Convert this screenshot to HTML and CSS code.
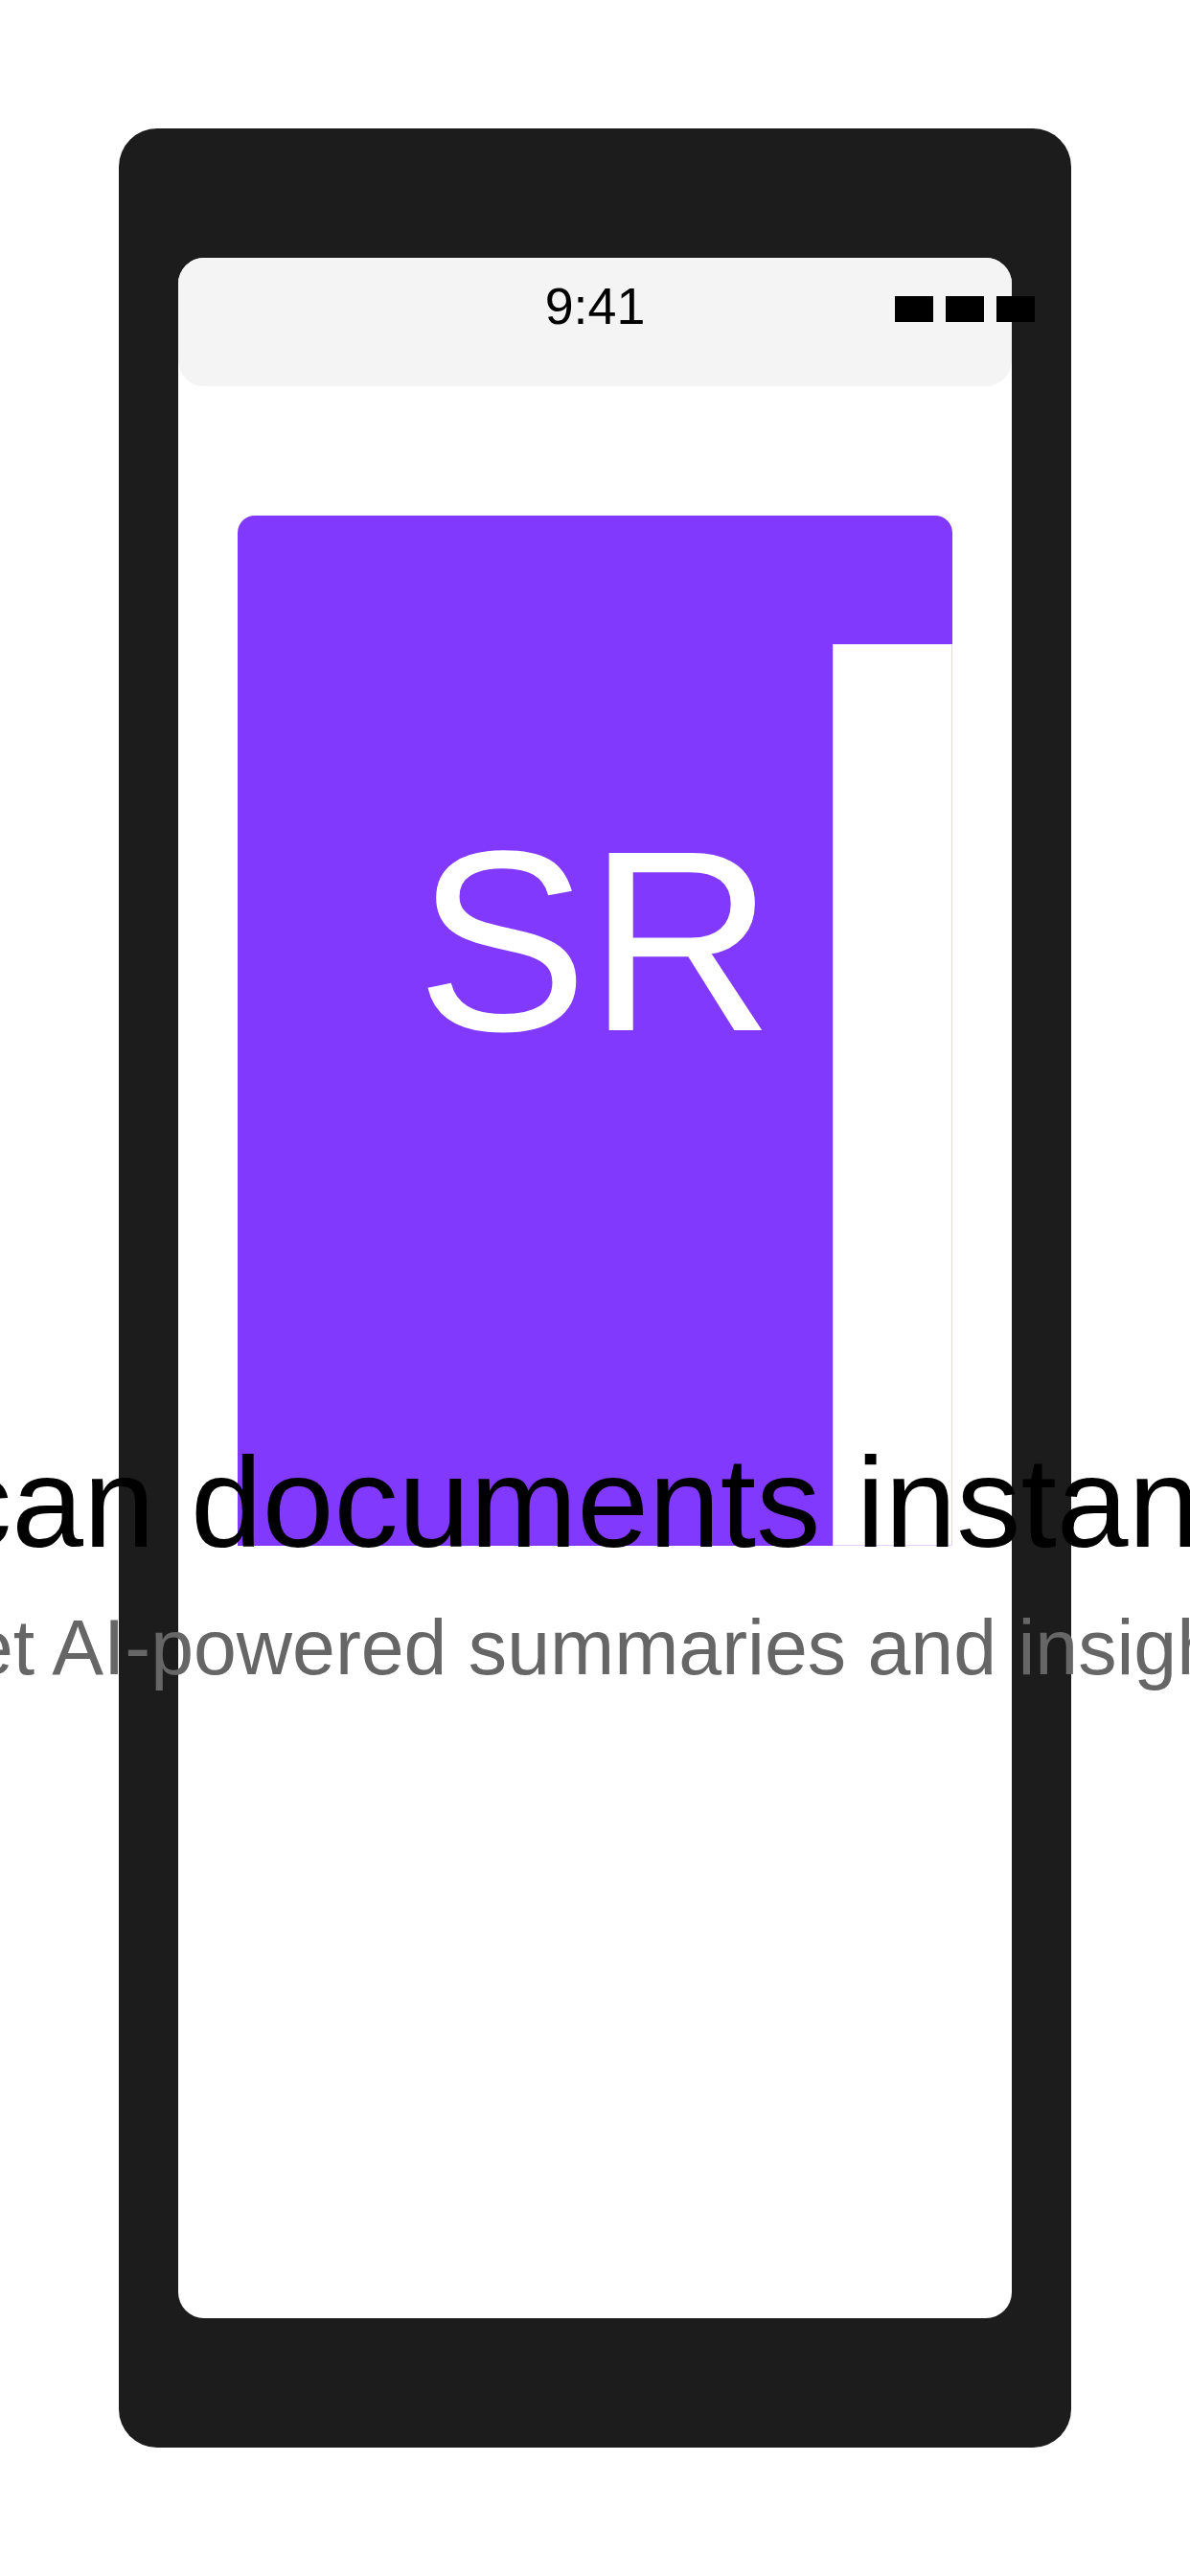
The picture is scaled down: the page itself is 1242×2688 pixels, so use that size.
FILE: index.html
```html
<!DOCTYPE html>
<html lang="en">
<head>
<meta charset="utf-8">
<title>Scan documents instantly</title>
<link rel="stylesheet" href="styles.css">
</head>
<body>
<div class="phone">
  <div class="screen">
    <div class="status">
      <span class="status-left"></span>
      <span class="time">9:41</span>
      <div class="icons"><i></i><i></i><i></i></div>
    </div>
    <div class="content">
      <div class="card">
        <span class="mono">SR</span>
        <div class="page"></div>
      </div>
      <h1 class="title">Scan documents instantly</h1>
      <p class="subtitle">Get AI-powered summaries and insights</p>
    </div>
  </div>
</div>
</body>
</html>
```

FILE: styles.css
```css
* { box-sizing: border-box; }
html, body {
  margin: 0;
  padding: 0;
  background: #ffffff;
  font-family: "Liberation Sans", Arial, sans-serif;
}
.phone {
  width: 993.6px;
  height: 2419.2px;
  margin: 134.4px auto 0;
  padding: 134.4px 62.1px;
  background: #1c1c1c;
  border-radius: 40px;
}
.screen {
  height: 100%;
  background: #ffffff;
  border-radius: 27px;
  display: flex;
  flex-direction: column;
}
.status {
  height: 134.4px;
  flex: none;
  background: #f4f4f4;
  border-radius: 27px;
  display: grid;
  grid-template-columns: 1fr auto 1fr;
  align-items: start;
  padding-top: 19.5px;
}
.time {
  font-size: 53.76px;
  line-height: normal;
  color: #000;
}
.icons {
  justify-self: end;
  display: flex;
  gap: 13px;
  margin-top: 21px;
  margin-right: -24px;
}
.icons i {
  display: block;
  width: 40px;
  height: 27px;
  background: #000;
}
.content {
  display: flex;
  flex-direction: column;
  align-items: center;
}
.card {
  position: relative;
  width: 745.2px;
  height: 1075.2px;
  margin-top: 134.4px;
  background: #8139fd;
  border-radius: 18px 18px 0 0;
  display: flex;
  justify-content: center;
  padding-top: 290px;
}
.mono {
  color: #ffffff;
  font-size: 268.8px;
  line-height: normal;
}
.page {
  position: absolute;
  right: 0;
  top: 134.4px;
  bottom: 0;
  width: 124.2px;
  background: #ffffff;
  border: 1px solid #e2d4ff;
}
.title {
  margin: -123px 0 0;
  font-size: 134.4px;
  font-weight: normal;
  line-height: normal;
  white-space: nowrap;
  color: #000;
  position: relative;
}
.subtitle {
  margin: 29.5px 0 0;
  font-size: 80.64px;
  line-height: normal;
  white-space: nowrap;
  color: #666666;
}
```
